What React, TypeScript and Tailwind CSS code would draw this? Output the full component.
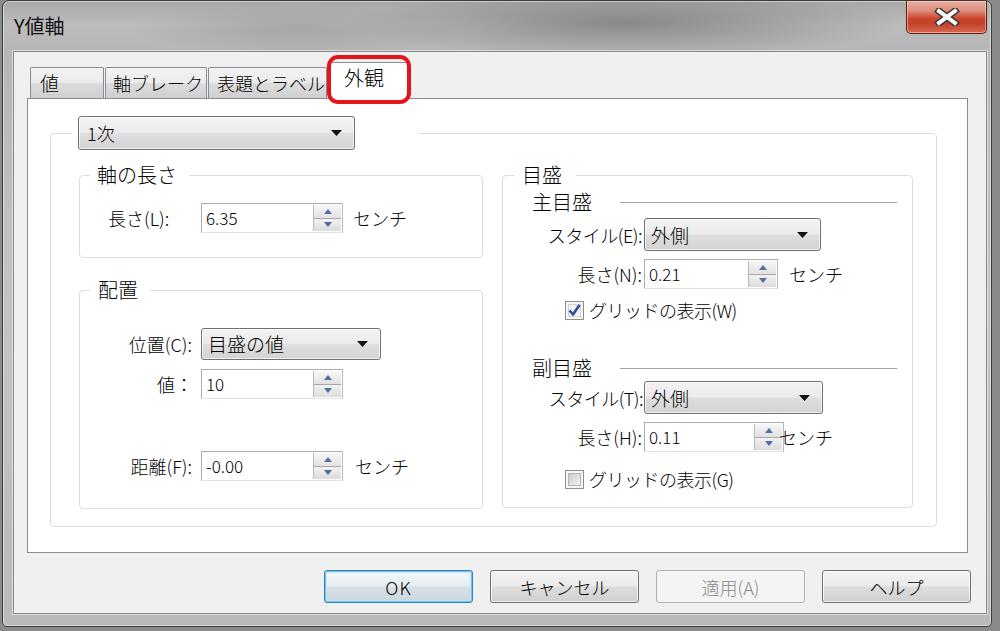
import React from "react";

const F = "font-['Noto_Sans_CJK_JP','Noto_Sans',sans-serif]";

function Arrow() {
  return (
    <svg width="11" height="6" viewBox="0 0 11 6">
      <path d="M0 0H11L5.5 6Z" fill="#111" />
    </svg>
  );
}

function Combo({ text, className, textClass }: { text: string; className: string; textClass?: string }) {
  return (
    <div
      className={`flex items-center justify-between rounded-[3px] border border-[#707070] bg-[linear-gradient(#f3f3f3,#ebebeb_48%,#dedede_52%,#d3d3d3)] shadow-[inset_0_0_0_1px_rgba(255,255,255,0.7)] pl-[6px] pr-[12px] ${className}`}
    >
      <span className={`text-[18px] leading-[24px] ${textClass ?? ""}`}>{text}</span>
      <Arrow />
    </div>
  );
}

function Spinner() {
  return (
    <div className="my-[1px] mr-[1px] w-[28px] flex flex-col border-l border-[#b9b9b9]">
      <div className="flex-1 flex items-center justify-center bg-[linear-gradient(#f7f7f7,#e2e2e2)] border-b border-[#a9a9a9]">
        <svg width="8" height="5" viewBox="0 0 8 5">
          <path d="M4 0L8 5H0Z" fill="#4f6fa6" />
        </svg>
      </div>
      <div className="flex-1 flex items-center justify-center bg-[linear-gradient(#f2f2f2,#dcdcdc)]">
        <svg width="8" height="5" viewBox="0 0 8 5">
          <path d="M0 0H8L4 5Z" fill="#4f6fa6" />
        </svg>
      </div>
    </div>
  );
}

function NumInput({ value, className }: { value: string; className: string }) {
  return (
    <div className={`flex bg-white border border-[#abadb3] border-b-[#dfe3e8] border-r-[#b5b8bd] ${className}`}>
      <div className="flex-1 pl-[4px] text-[17px] leading-[26px] self-center">{value}</div>
      <Spinner />
    </div>
  );
}

function Check({ checked, id }: { checked: boolean; id: string }) {
  return (
    <svg width="19" height="19" viewBox="0 0 19 19">
      <defs>
        <linearGradient id={id} x1="0" y1="0" x2="1" y2="1">
          <stop offset="0" stopColor="#c9c9c9" />
          <stop offset="1" stopColor="#f4f4f4" />
        </linearGradient>
      </defs>
      <rect x="0.5" y="0.5" width="18" height="18" fill="#f6f6f6" stroke="#8e8f8f" />
      <rect x="3.5" y="3.5" width="12" height="12" fill={checked ? "#f3f3f3" : `url(#${id})`} stroke={checked ? "#d0d0d0" : "#b5b5b5"} />
      {checked && (
        <path d="M4.5 9.5 L8 13.5 L14.5 4" stroke="#2f4a9e" strokeWidth="2.6" fill="none" strokeLinejoin="round" />
      )}
    </svg>
  );
}

function Button({ label, variant }: { label: string; variant?: "default" | "disabled" }) {
  const base = "w-[149px] h-[33px] rounded-[3px] flex items-center justify-center text-[18px] leading-[24px]";
  if (variant === "default")
    return (
      <div
        className={`${base} border border-[#3c7fb1] bg-[linear-gradient(#f1f6f9,#e7eef2_48%,#d8e1e7_52%,#ccd6dd)] shadow-[inset_0_0_0_1px_#6cc6ee,inset_0_0_0_2px_rgba(190,232,250,0.8)]`}
      >
        <span className="tracking-[1px]">{label}</span>
      </div>
    );
  if (variant === "disabled")
    return <div className={`${base} border border-[#adb2b5] bg-[#f4f4f4] text-[#8a8a8a]`}>{label}</div>;
  return (
    <div
      className={`${base} border border-[#707070] bg-[linear-gradient(#f2f2f2,#ebebeb_48%,#dddddd_52%,#cfcfcf)] shadow-[inset_0_0_0_1px_rgba(255,255,255,0.7)]`}
    >
      {label}
    </div>
  );
}

function CloseBtn() {
  return (
    <div className="mr-[4px] w-[81px] h-[33px] rounded-b-[5px] border border-t-0 border-[#5b2318] bg-[linear-gradient(#e9ad9f,#dd8f7d_30%,#c9452b_55%,#c24227_70%,#d56b52)] shadow-[inset_0_0_0_1px_rgba(255,210,200,0.55)] flex items-center justify-center">
      <svg width="26" height="18" viewBox="0 0 26 18">
        <path d="M5 3 L21 15 M21 3 L5 15" stroke="#3a3a3a" strokeWidth="7" strokeLinecap="square" />
        <path d="M5 3 L21 15 M21 3 L5 15" stroke="#ffffff" strokeWidth="4" strokeLinecap="square" />
      </svg>
    </div>
  );
}

function Group({
  title,
  className,
  legendClass,
  children,
}: {
  title: string;
  className: string;
  legendClass: string;
  children: React.ReactNode;
}) {
  return (
    <fieldset className={`rounded-[4px] border border-[#d5dfe5] ${className}`}>
      <legend className={`text-[20px] leading-[26px] ${legendClass}`}>{title}</legend>
      {children}
    </fieldset>
  );
}

export default function App() {
  return (
    <div className={`w-[1000px] h-[631px] overflow-hidden bg-[#8a8a8a] ${F} font-light text-black`}>
      <div className="ml-[2px] w-[990px] h-[627px] flex flex-col rounded-t-[7px] rounded-b-[5px] border border-[#3c3c3c] bg-[image:radial-gradient(ellipse_280px_34px_at_63%_22px,rgba(95,95,95,0.55),transparent),radial-gradient(ellipse_170px_26px_at_30%_28px,rgba(140,140,140,0.45),transparent),linear-gradient(#a8a8a8,#bcbcbc_24px,#b6b6b6_50px,#c4c4c4_300px,#bababa)] shadow-[inset_0_0_0_1px_rgba(255,255,255,0.45)]">
        {/* title bar */}
        <div className="h-[50px] flex items-start justify-between">
          <div className="pl-[11px] pt-[13px] text-[20px] leading-[24px] font-normal text-[#111]">Y値軸</div>
          <CloseBtn />
        </div>

        {/* client area */}
        <div className="ml-[10px] w-[974px] h-[563px] border border-[#8a8a8a] bg-[#f0f0f0] flex flex-col pl-[13px] pt-[10px] shadow-[0_0_0_1px_rgba(255,255,255,0.5)]">
          {/* tabs */}
          <div className="relative z-10 h-[37px] flex items-end pl-[3px]">
            <div className="mb-[1px] w-[74px] h-[31px] rounded-t-[2px] border border-b-0 border-[#898c95] bg-[linear-gradient(#f3f3f3,#ebebeb_50%,#dddddd_50%,#cfcfcf)] pl-[9px] text-[19px] leading-[30px]">
              値
            </div>
            <div className="mb-[1px] ml-[1px] w-[102px] h-[31px] rounded-t-[2px] border border-b-0 border-[#898c95] bg-[linear-gradient(#f3f3f3,#ebebeb_50%,#dddddd_50%,#cfcfcf)] pl-[7px] text-[18px] leading-[30px]">
              軸ブレーク
            </div>
            <div className="mb-[1px] ml-[1px] w-[119px] h-[31px] rounded-t-[2px] border border-b-0 border-[#898c95] bg-[linear-gradient(#f3f3f3,#ebebeb_50%,#dddddd_50%,#cfcfcf)] pl-[8px] text-[18px] leading-[30px]">
              表題とラベル
            </div>
            <div className="relative ml-[2px] w-[81px] h-[37px] rounded-t-[2px] border border-b-0 border-[#898c95] bg-white pl-[14px] text-[20px] leading-[30px]">
              外観
              <div className="absolute left-[-3px] top-[-8px] w-[84px] h-[49px] rounded-[11px] border-[4px] border-[#e5131b]" />
            </div>
          </div>

          {/* panel */}
          <div className="-mt-px w-[941px] h-[455px] border border-[#898c95] bg-white pl-[22px] pt-[17px]">
            <fieldset className="w-[887px] h-[411px] rounded-[4px] border border-[#d5dfe5]">
              <legend className="ml-[21px] pl-[6px] pr-[64px]">
                <Combo text="1次" className="w-[277px] h-[34px]" textClass="pl-[2px]" />
              </legend>

              <div className="flex gap-[19px] pl-[28px] pt-[12px]">
                {/* left column */}
                <div className="w-[404px] flex flex-col">
                  <Group title="軸の長さ" className="w-[404px] h-[96px]" legendClass="ml-[10px] pl-[7px] pr-[12px]">
                    <div className="mt-[15px] flex items-center pl-[28px]">
                      <div className="w-[93px] text-[18px] leading-[24px]">長さ(L):</div>
                      <NumInput value="6.35" className="w-[142px] h-[30px]" />
                      <div className="ml-[10px] text-[18px] leading-[24px]">センチ</div>
                    </div>
                  </Group>

                  <Group title="配置" className="mt-[19px] w-[404px] h-[232px]" legendClass="ml-[10px] pl-[8px] pr-[12px]">
                    <div className="mt-[25px] flex items-center">
                      <div className="w-[121px] pr-[9px] text-right text-[18px] leading-[24px]">位置(C):</div>
                      <Combo text="目盛の値" className="w-[180px] h-[32px]" textClass="text-[19px]" />
                    </div>
                    <div className="mt-[9px] flex items-center">
                      <div className="w-[121px] pr-[8px] text-right text-[18px] leading-[24px]">値：</div>
                      <NumInput value="10" className="w-[142px] h-[30px]" />
                    </div>
                    <div className="mt-[52px] flex items-center">
                      <div className="w-[121px] pr-[9px] text-right text-[18px] leading-[24px]">距離(F):</div>
                      <NumInput value="-0.00" className="w-[142px] h-[30px]" />
                      <div className="ml-[12px] text-[18px] leading-[24px]">センチ</div>
                    </div>
                  </Group>
                </div>

                {/* right column */}
                <Group title="目盛" className="w-[411px] h-[346px]" legendClass="ml-[12px] pl-[7px] pr-[14px]">
                  <div className="mt-[1px] h-[26px] flex items-center pl-[29px] pr-[15px]">
                    <div className="w-[88px] text-[20px] leading-[26px]">主目盛</div>
                    <div className="flex-1 h-px bg-[#a3a3a3]" />
                  </div>
                  <div className="mt-[3px] flex items-center">
                    <div className="w-[141px] pr-[2px] text-right text-[18px] leading-[24px] tracking-[-0.5px]">スタイル(E):</div>
                    <Combo text="外側" className="w-[177px] h-[33px]" textClass="text-[19px]" />
                  </div>
                  <div className="mt-[8px] flex items-center">
                    <div className="w-[141px] pr-[2px] text-right text-[18px] leading-[24px]">長さ(N):</div>
                    <NumInput value="0.21" className="w-[134px] h-[30px]" />
                    <div className="ml-[11px] text-[18px] leading-[24px]">センチ</div>
                  </div>
                  <div className="mt-[9px] flex items-center gap-[5px] pl-[62px]">
                    <Check checked id="cb1" />
                    <div className="text-[18px] leading-[24px] tracking-[-0.5px]">グリッドの表示(W)</div>
                  </div>

                  <div className="mt-[33px] h-[26px] flex items-center pl-[29px] pr-[15px]">
                    <div className="w-[88px] text-[20px] leading-[26px]">副目盛</div>
                    <div className="flex-1 h-px bg-[#a3a3a3]" />
                  </div>
                  <div className="flex items-center">
                    <div className="w-[141px] pr-[1px] text-right text-[18px] leading-[24px] tracking-[-0.5px]">スタイル(T):</div>
                    <Combo text="外側" className="w-[179px] h-[33px]" textClass="text-[19px]" />
                  </div>
                  <div className="mt-[8px] flex items-center">
                    <div className="w-[141px] pr-[2px] text-right text-[18px] leading-[24px]">長さ(H):</div>
                    <NumInput value="0.11" className="w-[140px] h-[30px]" />
                    <div className="-ml-[5px] text-[18px] leading-[24px]">センチ</div>
                  </div>
                  <div className="mt-[15px] flex items-center gap-[5px] pl-[62px]">
                    <Check checked={false} id="cb2" />
                    <div className="text-[18px] leading-[24px] tracking-[-0.5px]">グリッドの表示(G)</div>
                  </div>
                </Group>
              </div>
            </fieldset>
          </div>

          {/* buttons */}
          <div className="mt-[17px] pr-[15px] flex justify-end gap-[17px]">
            <Button label="OK" variant="default" />
            <Button label="キャンセル" />
            <Button label="適用(A)" variant="disabled" />
            <Button label="ヘルプ" />
          </div>
        </div>
      </div>
    </div>
  );
}
